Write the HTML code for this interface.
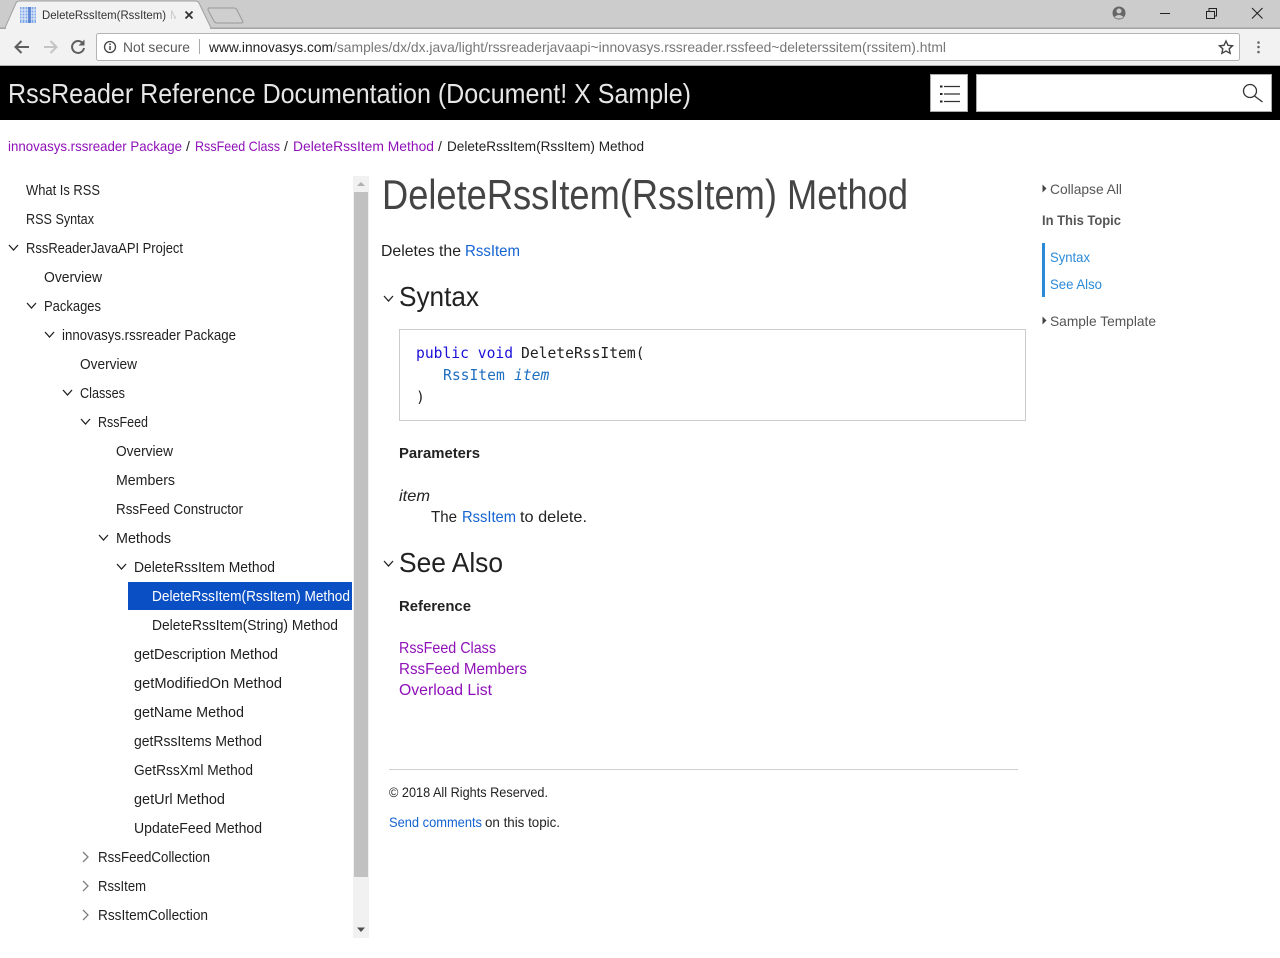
<!DOCTYPE html>
<html lang="en"><head><meta charset="utf-8"><title>DeleteRssItem(RssItem) Method</title>
<style>
html,body{margin:0;padding:0;background:#fff;width:1280px;height:958px;overflow:hidden}
svg{display:block}
text{font-family:"Liberation Sans",sans-serif;font-size:14px;fill:#222;white-space:pre}
.t text{font-size:14.5px;fill:#1f1f1f}
.v{fill:#8f10b8}.b{fill:#1463d2}
.n{stroke:#222;stroke-width:1.3;fill:none}
.g{stroke:#808080;stroke-width:1.3;fill:none}
.m{font-family:"DejaVu Sans Mono",monospace;font-size:14.67px}
.r text{fill:#555}
</style></head><body>
<svg xmlns="http://www.w3.org/2000/svg" width="1280" height="958" viewBox="0 0 1280 958">
<rect width="1280" height="958" fill="#fff"/>
<!-- browser chrome -->
<rect width="1280" height="28" fill="#cccccc"/>
<rect y="28" width="1280" height="38" fill="#f2f2f2"/>
<rect y="28" width="1280" height="1" fill="#a8a8a8"/>
<path d="M0 28H5L16 3Q17 1 20 1H195Q198 1 199 3L211 28H1280" fill="#f2f2f2" stroke="#a0a0a0"/>
<rect x="6" y="28" width="204" height="2" fill="#f2f2f2"/>
<path d="M209 8H234Q236 8 237 10L243 22Q243 23 241 23H217Q215 23 214 21L208 10Q208 8 209 8Z" fill="#cfcfcf" stroke="#999"/>
<!-- favicon -->
<rect x="20" y="7" width="16" height="16" fill="#7fa8e8"/>
<path d="M22 7V23M25 7V23M28 7V23M31 7V23M34 7V23M20 10H36M20 13H36M20 16H36M20 19H36" stroke="#e8eefa" stroke-width="1"/>
<rect x="28" y="7" width="3" height="16" fill="#3f6fc8" opacity=".7"/>
<text x="42" y="19" style="font-size:12px;fill:#333" textLength="124" lengthAdjust="spacingAndGlyphs">DeleteRssItem(RssItem)</text>
<text x="170" y="19" style="font-size:12px;fill:#ccc">M</text>
<rect x="176" y="8" width="8" height="14" fill="#f2f2f2"/>
<path d="M185.500 11.500L192.500 18.500M192.500 11.500L185.500 18.500" stroke="#333" stroke-width="1.800"/>
<!-- window controls -->
<circle cx="1119" cy="13" r="6.500" fill="#666"/>
<circle cx="1119" cy="11" r="2.500" fill="#ccc"/>
<path d="M1114.500 17Q1119 13 1123.500 17L1121 18.500H1117Z" fill="#ccc"/>
<path d="M1160 13.500H1170" stroke="#222" stroke-width="1"/>
<path d="M1206.500 11.500H1214.500V18.500H1206.500ZM1209 11V8.500H1216.500V16H1215" fill="none" stroke="#222" stroke-width="1"/>
<path d="M1252 8L1262.500 18.500M1262.500 8L1252 18.500" stroke="#222" stroke-width="1.100"/>
<!-- nav -->
<path d="M29 47H16M21.500 41L15.500 47L21.500 53" fill="none" stroke="#5f5f5f" stroke-width="2"/>
<path d="M44 47H56M50.500 41L56.500 47L50.500 53" fill="none" stroke="#c4c4c4" stroke-width="2"/>
<path d="M83 43.500A6 6 0 1 0 84 48" fill="none" stroke="#5f5f5f" stroke-width="2"/>
<path d="M84.500 39.500V45.500H78.500Z" fill="#5f5f5f"/>
<rect x="96.500" y="33.500" width="1143" height="27" rx="2" fill="#fff" stroke="#b4b4b4"/>
<circle cx="110" cy="47" r="5.500" fill="none" stroke="#444" stroke-width="1.300"/>
<path d="M110 46V50M110 43.500V45" stroke="#444" stroke-width="1.500"/>
<text x="123" y="52" style="fill:#5a5a5a" textLength="67" lengthAdjust="spacingAndGlyphs">Not secure</text>
<rect x="199" y="39" width="1" height="15" fill="#aaa"/>
<text x="209" y="52" style="fill:#222" textLength="124" lengthAdjust="spacingAndGlyphs">www.innovasys.com</text>
<text x="333" y="52" style="fill:#777" textLength="613" lengthAdjust="spacingAndGlyphs">/samples/dx/dx.java/light/rssreaderjavaapi~innovasys.rssreader.rssfeed~deleterssitem(rssitem).html</text>
<path d="M1226 41L1228 45.300L1232.500 45.800L1229.200 48.800L1230.100 53.300L1226 51L1221.900 53.300L1222.800 48.800L1219.500 45.800L1224 45.300Z" fill="none" stroke="#444" stroke-width="1.400"/>
<circle cx="1258.500" cy="42.500" r="1.300" fill="#666"/><circle cx="1258.500" cy="47" r="1.300" fill="#666"/><circle cx="1258.500" cy="52" r="1.300" fill="#666"/>
<!-- header -->
<rect y="65" width="1280" height="1" fill="#b0b0b0"/>
<rect y="66" width="1280" height="54" fill="#000"/>
<text x="8" y="103" style="font-size:28px;fill:#e6e6e6" textLength="683" lengthAdjust="spacingAndGlyphs">RssReader Reference Documentation (Document! X Sample)</text>
<rect x="930.500" y="74.500" width="37" height="37" fill="#fff" stroke="#aaa"/>
<path d="M944 86.500H960M944 94H960M944 101.500H960" stroke="#333" stroke-width="1.300"/>
<path d="M940 86.500H942.500M940 94H942.500M940 101.500H942.500" stroke="#222" stroke-width="2"/>
<rect x="976.500" y="74.500" width="295" height="37" fill="#fff" stroke="#aaa"/>
<circle cx="1250" cy="91" r="6.500" fill="none" stroke="#333" stroke-width="1.300"/>
<path d="M1254.500 96L1262.500 102" stroke="#333" stroke-width="1.300"/>
<!-- breadcrumb -->
<text x="8" y="151" style="fill:#8f10b8" textLength="174" lengthAdjust="spacingAndGlyphs">innovasys.rssreader Package</text>
<text x="186" y="151">/</text>
<text x="195" y="151" style="fill:#8f10b8" textLength="85" lengthAdjust="spacingAndGlyphs">RssFeed Class</text>
<text x="284" y="151">/</text>
<text x="293" y="151" style="fill:#8f10b8" textLength="141" lengthAdjust="spacingAndGlyphs">DeleteRssItem Method</text>
<text x="438" y="151">/</text>
<text x="447" y="151" textLength="197" lengthAdjust="spacingAndGlyphs">DeleteRssItem(RssItem) Method</text>
<!-- tree -->
<g class="t">
<text x="26" y="195" textLength="74" lengthAdjust="spacingAndGlyphs">What Is RSS</text>
<text x="26" y="224" textLength="68" lengthAdjust="spacingAndGlyphs">RSS Syntax</text>
<text x="26" y="253" textLength="157" lengthAdjust="spacingAndGlyphs">RssReaderJavaAPI Project</text>
<text x="44" y="282" textLength="58" lengthAdjust="spacingAndGlyphs">Overview</text>
<text x="44" y="311" textLength="57" lengthAdjust="spacingAndGlyphs">Packages</text>
<text x="62" y="340" textLength="174" lengthAdjust="spacingAndGlyphs">innovasys.rssreader Package</text>
<text x="80" y="369" textLength="57" lengthAdjust="spacingAndGlyphs">Overview</text>
<text x="80" y="398" textLength="45" lengthAdjust="spacingAndGlyphs">Classes</text>
<text x="98" y="427" textLength="50" lengthAdjust="spacingAndGlyphs">RssFeed</text>
<text x="116" y="456" textLength="57" lengthAdjust="spacingAndGlyphs">Overview</text>
<text x="116" y="485" textLength="59" lengthAdjust="spacingAndGlyphs">Members</text>
<text x="116" y="514" textLength="127" lengthAdjust="spacingAndGlyphs">RssFeed Constructor</text>
<text x="116" y="543" textLength="55" lengthAdjust="spacingAndGlyphs">Methods</text>
<text x="134" y="572" textLength="141" lengthAdjust="spacingAndGlyphs">DeleteRssItem Method</text>
<rect x="128" y="582" width="224" height="28" fill="#0a50c4"/>
<text x="152" y="601" style="fill:#fff" textLength="198" lengthAdjust="spacingAndGlyphs">DeleteRssItem(RssItem) Method</text>
<text x="152" y="630" textLength="186" lengthAdjust="spacingAndGlyphs">DeleteRssItem(String) Method</text>
<text x="134" y="659" textLength="144" lengthAdjust="spacingAndGlyphs">getDescription Method</text>
<text x="134" y="688" textLength="148" lengthAdjust="spacingAndGlyphs">getModifiedOn Method</text>
<text x="134" y="717" textLength="110" lengthAdjust="spacingAndGlyphs">getName Method</text>
<text x="134" y="746" textLength="128" lengthAdjust="spacingAndGlyphs">getRssItems Method</text>
<text x="134" y="775" textLength="119" lengthAdjust="spacingAndGlyphs">GetRssXml Method</text>
<text x="134" y="804" textLength="91" lengthAdjust="spacingAndGlyphs">getUrl Method</text>
<text x="134" y="833" textLength="128" lengthAdjust="spacingAndGlyphs">UpdateFeed Method</text>
<text x="98" y="862" textLength="112" lengthAdjust="spacingAndGlyphs">RssFeedCollection</text>
<text x="98" y="891" textLength="48" lengthAdjust="spacingAndGlyphs">RssItem</text>
<text x="98" y="920" textLength="110" lengthAdjust="spacingAndGlyphs">RssItemCollection</text>
</g>
<path class="n" d="M9 245L13.500 250L18 245M27 303L31.500 308L36 303M45 332L49.500 337L54 332M63 390L67.500 395L72 390M81 419L85.500 424L90 419M99 535L103.500 540L108 535M117 564L121.500 569L126 564"/>
<path class="g" d="M83 852L88 857L83 862M83 881L88 886L83 891M83 910L88 915L83 920"/>
<!-- scrollbar -->
<rect x="353" y="176" width="16" height="762" fill="#f1f1f1"/>
<rect x="354" y="192" width="14" height="685" fill="#c1c1c1"/>
<path d="M357 186L361 182L365 186Z" fill="#b0b0b0"/>
<path d="M357 927.500H365L361 932Z" fill="#505050"/>
<!-- main -->
<text x="382" y="209" style="font-size:42px;fill:#444" textLength="526" lengthAdjust="spacingAndGlyphs">DeleteRssItem(RssItem) Method</text>
<text x="381" y="256" style="font-size:16px" textLength="80" lengthAdjust="spacingAndGlyphs">Deletes the</text>
<text x="465" y="256" style="font-size:16px;fill:#1463d2" textLength="55" lengthAdjust="spacingAndGlyphs">RssItem</text>
<path class="n" d="M384 296L388.500 301L393 296M384 561L388.500 566L393 561"/>
<text x="399" y="306" style="font-size:28px" textLength="80" lengthAdjust="spacingAndGlyphs">Syntax</text>
<rect x="399.500" y="329.500" width="626" height="91" fill="#fff" stroke="#ccc"/>
<text x="416" y="358" style="fill:#1a10d8;font-family:'DejaVu Sans Mono',monospace;font-size:14.67px">public void</text>
<text x="521" y="358" style="font-family:'DejaVu Sans Mono',monospace;font-size:14.67px">DeleteRssItem(</text>
<text x="443" y="380" style="fill:#1f6fc0;font-family:'DejaVu Sans Mono',monospace;font-size:14.67px">RssItem</text>
<text x="514" y="380" style="fill:#1f6fc0;font-style:italic;font-family:'DejaVu Sans Mono',monospace;font-size:14.67px">item</text>
<text x="416" y="402" style="font-family:'DejaVu Sans Mono',monospace;font-size:14.67px">)</text>
<text x="399" y="458" style="font-size:15px;font-weight:bold" textLength="81" lengthAdjust="spacingAndGlyphs">Parameters</text>
<text x="399" y="501" style="font-size:16px;font-style:italic" textLength="31" lengthAdjust="spacingAndGlyphs">item</text>
<text x="431" y="522" style="font-size:16px" textLength="26" lengthAdjust="spacingAndGlyphs">The</text>
<text x="462" y="522" style="font-size:16px;fill:#1463d2" textLength="54" lengthAdjust="spacingAndGlyphs">RssItem</text>
<text x="520" y="522" style="font-size:16px" textLength="67" lengthAdjust="spacingAndGlyphs">to delete.</text>
<text x="399" y="572" style="font-size:28px" textLength="104" lengthAdjust="spacingAndGlyphs">See Also</text>
<text x="399" y="611" style="font-size:15px;font-weight:bold" textLength="72" lengthAdjust="spacingAndGlyphs">Reference</text>
<text x="399" y="653" style="font-size:16px;fill:#8f10b8" textLength="97" lengthAdjust="spacingAndGlyphs">RssFeed Class</text>
<text x="399" y="674" style="font-size:16px;fill:#8f10b8" textLength="128" lengthAdjust="spacingAndGlyphs">RssFeed Members</text>
<text x="399" y="695" style="font-size:16px;fill:#8f10b8" textLength="93" lengthAdjust="spacingAndGlyphs">Overload List</text>
<rect x="389" y="769" width="629" height="1" fill="#d0d0d0"/>
<text x="389" y="797" textLength="159" lengthAdjust="spacingAndGlyphs">© 2018 All Rights Reserved.</text>
<text x="389" y="827" style="fill:#1463d2" textLength="93" lengthAdjust="spacingAndGlyphs">Send comments</text>
<text x="485" y="827" textLength="75" lengthAdjust="spacingAndGlyphs">on this topic.</text>
<!-- right -->
<g class="r">
<path d="M1042.500 184.500L1046.500 188.500L1042.500 192.500Z" fill="#444"/>
<text x="1050" y="194" textLength="72" lengthAdjust="spacingAndGlyphs">Collapse All</text>
<text x="1042" y="225" style="font-weight:bold" textLength="79" lengthAdjust="spacingAndGlyphs">In This Topic</text>
<rect x="1042" y="243" width="3" height="54" fill="#2b8ad8"/>
<text x="1050" y="262" style="fill:#2b8ad8" textLength="40" lengthAdjust="spacingAndGlyphs">Syntax</text>
<text x="1050" y="289" style="fill:#2b8ad8" textLength="52" lengthAdjust="spacingAndGlyphs">See Also</text>
<path d="M1042.500 316.500L1046.500 320.500L1042.500 324.500Z" fill="#444"/>
<text x="1050" y="326" textLength="106" lengthAdjust="spacingAndGlyphs">Sample Template</text>
</g>
</svg>
</body></html>
